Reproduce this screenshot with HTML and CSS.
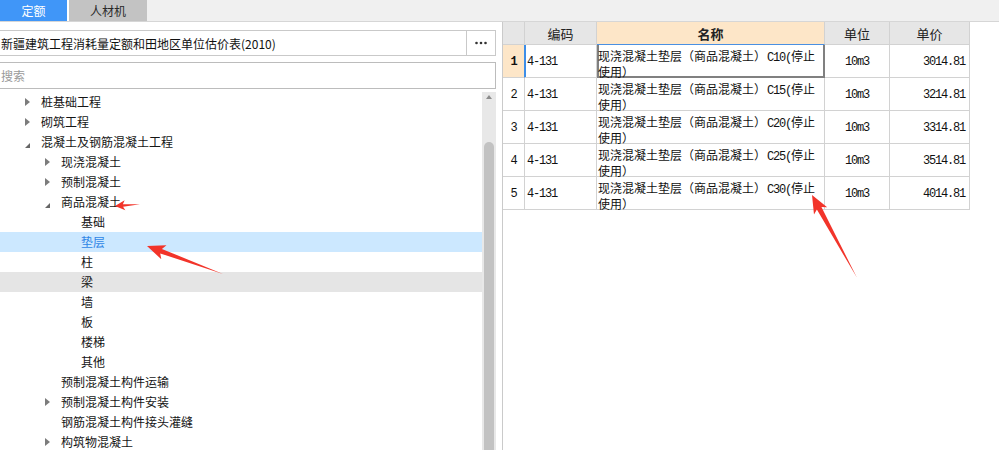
FILE: index.html
```html
<!DOCTYPE html>
<html lang="zh-CN">
<head>
<meta charset="utf-8">
<title>定额</title>
<link rel="stylesheet" href="styles.css">
</head>
<body>
<div class="app">
  <div class="tabbar">
    <div class="tab tab-active">定额</div>
    <div class="tab tab-plain">人材机</div>
  </div>
  <div class="main">
    <div class="left">
      <div class="combo">
        <div class="combo-text">新疆建筑工程消耗量定额和田地区单位估价表(2010)</div>
        <div class="combo-btn">
          <svg width="14" height="4" viewBox="0 0 14 4"><circle cx="2.5" cy="2" r="1.3" fill="#333"/><circle cx="7" cy="2" r="1.3" fill="#333"/><circle cx="11.5" cy="2" r="1.3" fill="#333"/></svg>
        </div>
      </div>
      <div class="search">搜索</div>
      <div class="tree-wrap">
        <div class="tree">
          <div class="row l1"><span class="tg closed"></span><span>桩基础工程</span></div>
          <div class="row l1"><span class="tg closed"></span><span>砌筑工程</span></div>
          <div class="row l1"><span class="tg open"></span><span>混凝土及钢筋混凝土工程</span></div>
          <div class="row l2"><span class="tg closed"></span><span>现浇混凝土</span></div>
          <div class="row l2"><span class="tg closed"></span><span>预制混凝土</span></div>
          <div class="row l2"><span class="tg open"></span><span>商品混凝土</span></div>
          <div class="row l3"><span class="tg"></span><span>基础</span></div>
          <div class="row l3 selected"><span class="tg"></span><span>垫层</span></div>
          <div class="row l3"><span class="tg"></span><span>柱</span></div>
          <div class="row l3 hover"><span class="tg"></span><span>梁</span></div>
          <div class="row l3"><span class="tg"></span><span>墙</span></div>
          <div class="row l3"><span class="tg"></span><span>板</span></div>
          <div class="row l3"><span class="tg"></span><span>楼梯</span></div>
          <div class="row l3"><span class="tg"></span><span>其他</span></div>
          <div class="row l2"><span class="tg"></span><span>预制混凝土构件运输</span></div>
          <div class="row l2"><span class="tg closed"></span><span>预制混凝土构件安装</span></div>
          <div class="row l2"><span class="tg"></span><span>钢筋混凝土构件接头灌缝</span></div>
          <div class="row l2"><span class="tg closed"></span><span>构筑物混凝土</span></div>
        </div>
        <div class="vscroll">
          <div class="vs-up"></div>
          <div class="vs-thumb"></div>
        </div>
      </div>
    </div>
    <div class="right">
      <div class="grid">
        <div class="c h"></div>
        <div class="c h">编码</div>
        <div class="c h h-name">名称</div>
        <div class="c h">单位</div>
        <div class="c h">单价</div>

        <div class="c rn rn-cur">1</div>
        <div class="c code code-cur">4-131</div>
        <div class="c name name-cur">现浇混凝土垫层（商品混凝土）<span class="lat">C10(</span>停止<br>使用）</div>
        <div class="c unit">10m3</div>
        <div class="c price">3014.81</div>

        <div class="c rn">2</div>
        <div class="c code">4-131</div>
        <div class="c name">现浇混凝土垫层（商品混凝土）<span class="lat">C15(</span>停止<br>使用）</div>
        <div class="c unit">10m3</div>
        <div class="c price">3214.81</div>

        <div class="c rn">3</div>
        <div class="c code">4-131</div>
        <div class="c name">现浇混凝土垫层（商品混凝土）<span class="lat">C20(</span>停止<br>使用）</div>
        <div class="c unit">10m3</div>
        <div class="c price">3314.81</div>

        <div class="c rn">4</div>
        <div class="c code">4-131</div>
        <div class="c name">现浇混凝土垫层（商品混凝土）<span class="lat">C25(</span>停止<br>使用）</div>
        <div class="c unit">10m3</div>
        <div class="c price">3514.81</div>

        <div class="c rn">5</div>
        <div class="c code">4-131</div>
        <div class="c name">现浇混凝土垫层（商品混凝土）<span class="lat">C30(</span>停止<br>使用）</div>
        <div class="c unit">10m3</div>
        <div class="c price">4014.81</div>
      </div>
    </div>
  </div>
  <svg class="marks" width="999" height="450" viewBox="0 0 999 450">
    <polygon transform="translate(115 206) rotate(176)" points="-25,0 -8,-1.3 -10,-5 0,0 -10,5 -8,1.3" fill="#f2342a"/>
    <polygon transform="translate(147 246) rotate(200.2)" points="-81,0 -15,-2.4 -18,-7.5 0,0 -18,7.5 -15,2.4" fill="#f2342a"/>
    <polygon transform="translate(812 195) rotate(241.5)" points="-94,0 -15,-2.6 -18,-7.5 0,0 -18,7.5 -15,2.6" fill="#f2342a"/>
  </svg>
</div>
</body>
</html>
```

FILE: styles.css
```css
html, body {
  margin: 0;
  padding: 0;
}
body {
  font-family: "Noto Sans CJK SC", "Noto Sans", sans-serif;
  font-size: 12px;
  color: #1a1a1a;
  background: #fff;
  overflow: hidden;
}
.app {
  position: relative;
  width: 999px;
  height: 450px;
  overflow: hidden;
}

/* tabs */
.tabbar {
  display: flex;
  height: 21px;
  background: #f0f0f0;
  border-bottom: 1px solid #d6d6d6;
}
.tab {
  display: flex;
  align-items: center;
  justify-content: center;
  height: 21px;
  font-size: 12px;
}
.tab-active {
  width: 67px;
  background: #4096f8;
  color: #fff;
}
.tab-plain {
  width: 78px;
  background: #c3c3c3;
  color: #2a2a2a;
  border-left: 2px solid #fff;
}

.main {
  display: flex;
  height: 428px;
}

/* left panel */
.left {
  width: 502px;
  flex: none;
  display: flex;
  flex-direction: column;
  padding-top: 8px;
  box-sizing: border-box;
}
.combo {
  display: flex;
  width: 496px;
  height: 26px;
  box-sizing: border-box;
  border-top: 1px solid #c9c9c9;
  border-bottom: 1px solid #c9c9c9;
  border-right: 1px solid #c9c9c9;
}
.combo-text {
  flex: 1;
  display: flex;
  align-items: center;
  padding-left: 1px;
  color: #111;
  white-space: nowrap;
}
.combo-btn {
  width: 28px;
  border-left: 1px solid #c9c9c9;
  display: flex;
  align-items: center;
  justify-content: center;
}
.search {
  margin-top: 6px;
  width: 496px;
  height: 27px;
  box-sizing: border-box;
  border-top: 1px solid #bcbcbc;
  border-bottom: 1px solid #bcbcbc;
  border-right: 1px solid #bcbcbc;
  padding-left: 1px;
  display: flex;
  align-items: center;
  color: #9a9a9a;
}
.tree-wrap {
  margin-top: 3px;
  flex: 1;
  display: flex;
  width: 496px;
  min-height: 0;
}
.tree {
  width: 482px;
  flex: none;
}
.row {
  height: 20px;
  box-sizing: border-box;
  padding-bottom: 1px;
  display: flex;
  align-items: center;
  white-space: nowrap;
  color: #151515;
}
.row.l1 { padding-left: 25px; }
.row.l2 { padding-left: 45px; }
.row.l3 { padding-left: 65px; }
.row.selected {
  background: #cce8ff;
  color: #2f86e6;
}
.row.hover {
  background: #e5e5e5;
}
.tg {
  width: 16px;
  flex: none;
  display: flex;
}
.tg.closed::before {
  content: "";
  width: 0;
  height: 0;
  margin-top: 1px;
  border-left: 5px solid #7c7c7c;
  border-top: 4px solid transparent;
  border-bottom: 4px solid transparent;
}
.tg.open::before {
  content: "";
  width: 0;
  height: 0;
  margin-top: 7px;
  border-bottom: 5px solid #666;
  border-left: 5px solid transparent;
}
.vscroll {
  width: 14px;
  flex: none;
  background: #e8e8e8;
  display: flex;
  flex-direction: column;
  align-items: center;
  padding-top: 3px;
  box-sizing: border-box;
}
.vs-up {
  width: 0;
  height: 0;
  border-bottom: 4px solid #8c8c8c;
  border-left: 3.5px solid transparent;
  border-right: 3.5px solid transparent;
}
.vs-thumb {
  margin-top: 43px;
  width: 10px;
  flex: 1;
  background: #c2c2c2;
  border-radius: 5px 5px 0 0;
}

/* right panel */
.right {
  flex: 1;
  border-left: 1px solid #cacaca;
  background: #fff;
}
.grid {
  display: grid;
  grid-template-columns: 22px 72px 228px 65px 80px;
  grid-template-rows: 23px repeat(5, 33px);
  width: 467px;
}
.c {
  box-sizing: border-box;
  border-right: 1px solid #d2d2d2;
  border-bottom: 1px solid #d2d2d2;
  font-size: 12px;
  color: #111;
  white-space: nowrap;
}
.h {
  background: #e6e6e6;
  display: flex;
  align-items: center;
  justify-content: center;
  font-size: 13px;
  color: #222;
}
.h-name {
  background: #fde6c8;
  font-weight: bold;
  border-bottom-color: #4a90e2;
}
.rn, .code, .unit, .price {
  display: flex;
  align-items: center;
  font-family: "Liberation Mono", "DejaVu Sans Mono", monospace;
  letter-spacing: -1.2px;
}
.rn {
  justify-content: center;
  padding-top: 1px;
}
.rn-cur {
  background: #fde6c8;
  font-weight: bold;
  border-right: 1px solid #3d8ee8;
}
.code {
  padding-left: 2px;
  padding-top: 1px;
}
.code-cur {
  box-shadow: inset 1px 0 0 #3d8ee8;
}
.name {
  line-height: 13px;
  padding: 4px 0 0 1px;
}
.lat {
  font-family: "Liberation Mono", monospace;
  letter-spacing: -1.2px;
  margin-left: 1px;
}
.name-cur {
  box-shadow: inset 2px 0 0 #808080, inset -1px 0 0 #808080, inset 0 -1px 0 #808080;
  border-right-color: #808080;
  border-bottom-color: #808080;
}
.unit {
  justify-content: center;
  padding-top: 1px;
}
.price {
  justify-content: flex-end;
  padding-right: 4px;
  padding-top: 1px;
}

/* annotation arrows */
.marks {
  position: absolute;
  left: 0;
  top: 0;
  pointer-events: none;
}
```
